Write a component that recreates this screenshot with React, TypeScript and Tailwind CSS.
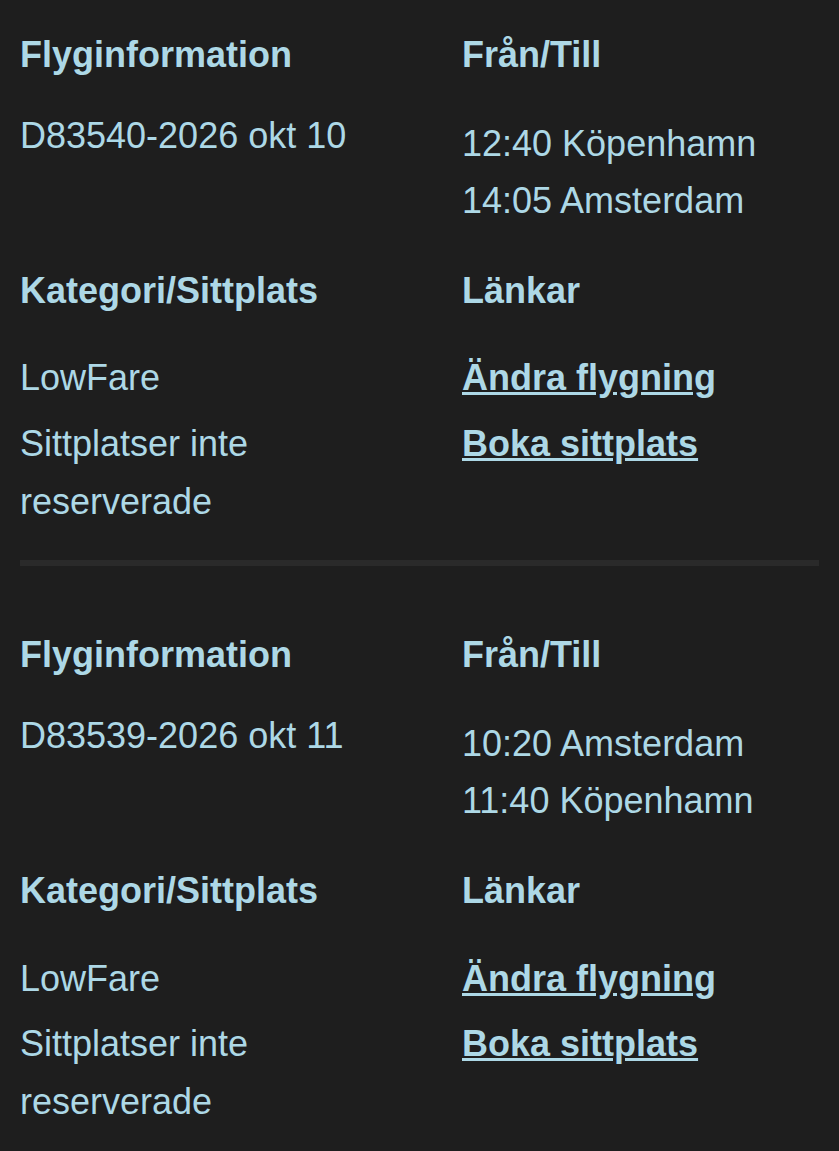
import React from "react";

type Flight = {
  id: string;
  from: string;
  to: string;
};

const flights: Flight[] = [
  { id: "D83540-2026 okt 10", from: "12:40 Köpenhamn", to: "14:05 Amsterdam" },
  { id: "D83539-2026 okt 11", from: "10:20 Amsterdam", to: "11:40 Köpenhamn" },
];

function Block({ f, last }: { f: Flight; last: boolean }) {
  return (
    <section className="pt-[26px] px-[20px]">
      <div className="grid grid-cols-[442px_1fr]">
        <div className="pr-[40px]">
          <h3 className="font-bold">Flyginformation</h3>
          <p className="mt-[23px]">{f.id}</p>
        </div>
        <div>
          <h3 className="font-bold">Från/Till</h3>
          <p className="mt-[31px]">{f.from}</p>
          <p>{f.to}</p>
        </div>
      </div>
      <div className="grid grid-cols-[442px_1fr] mt-[32px]">
        <div className="pr-[40px]">
          <h3 className="font-bold">Kategori/Sittplats</h3>
          <p className="mt-[30px]">LowFare</p>
          <p className="mt-[8px]">Sittplatser inte reserverade</p>
        </div>
        <div>
          <h3 className="font-bold">Länkar</h3>
          <p className="mt-[30px]">
            <a href="#" className="font-bold underline">
              Ändra flygning
            </a>
          </p>
          <p className="mt-[8px]">
            <a href="#" className="font-bold underline">
              Boka sittplats
            </a>
          </p>
        </div>
      </div>
      {!last && <div className="mt-[30px] mb-[34px] h-[6px] bg-[#2a2a2a]" />}
    </section>
  );
}

export default function App() {
  return (
    <div
      className="min-h-screen bg-[#1e1e1e] text-[#add8e6] text-[36px] leading-[1.6]"
      style={{ fontFamily: '"Liberation Sans", Arial, sans-serif' }}
    >
      {flights.map((f, i) => (
        <Block key={f.id} f={f} last={i === flights.length - 1} />
      ))}
    </div>
  );
}
